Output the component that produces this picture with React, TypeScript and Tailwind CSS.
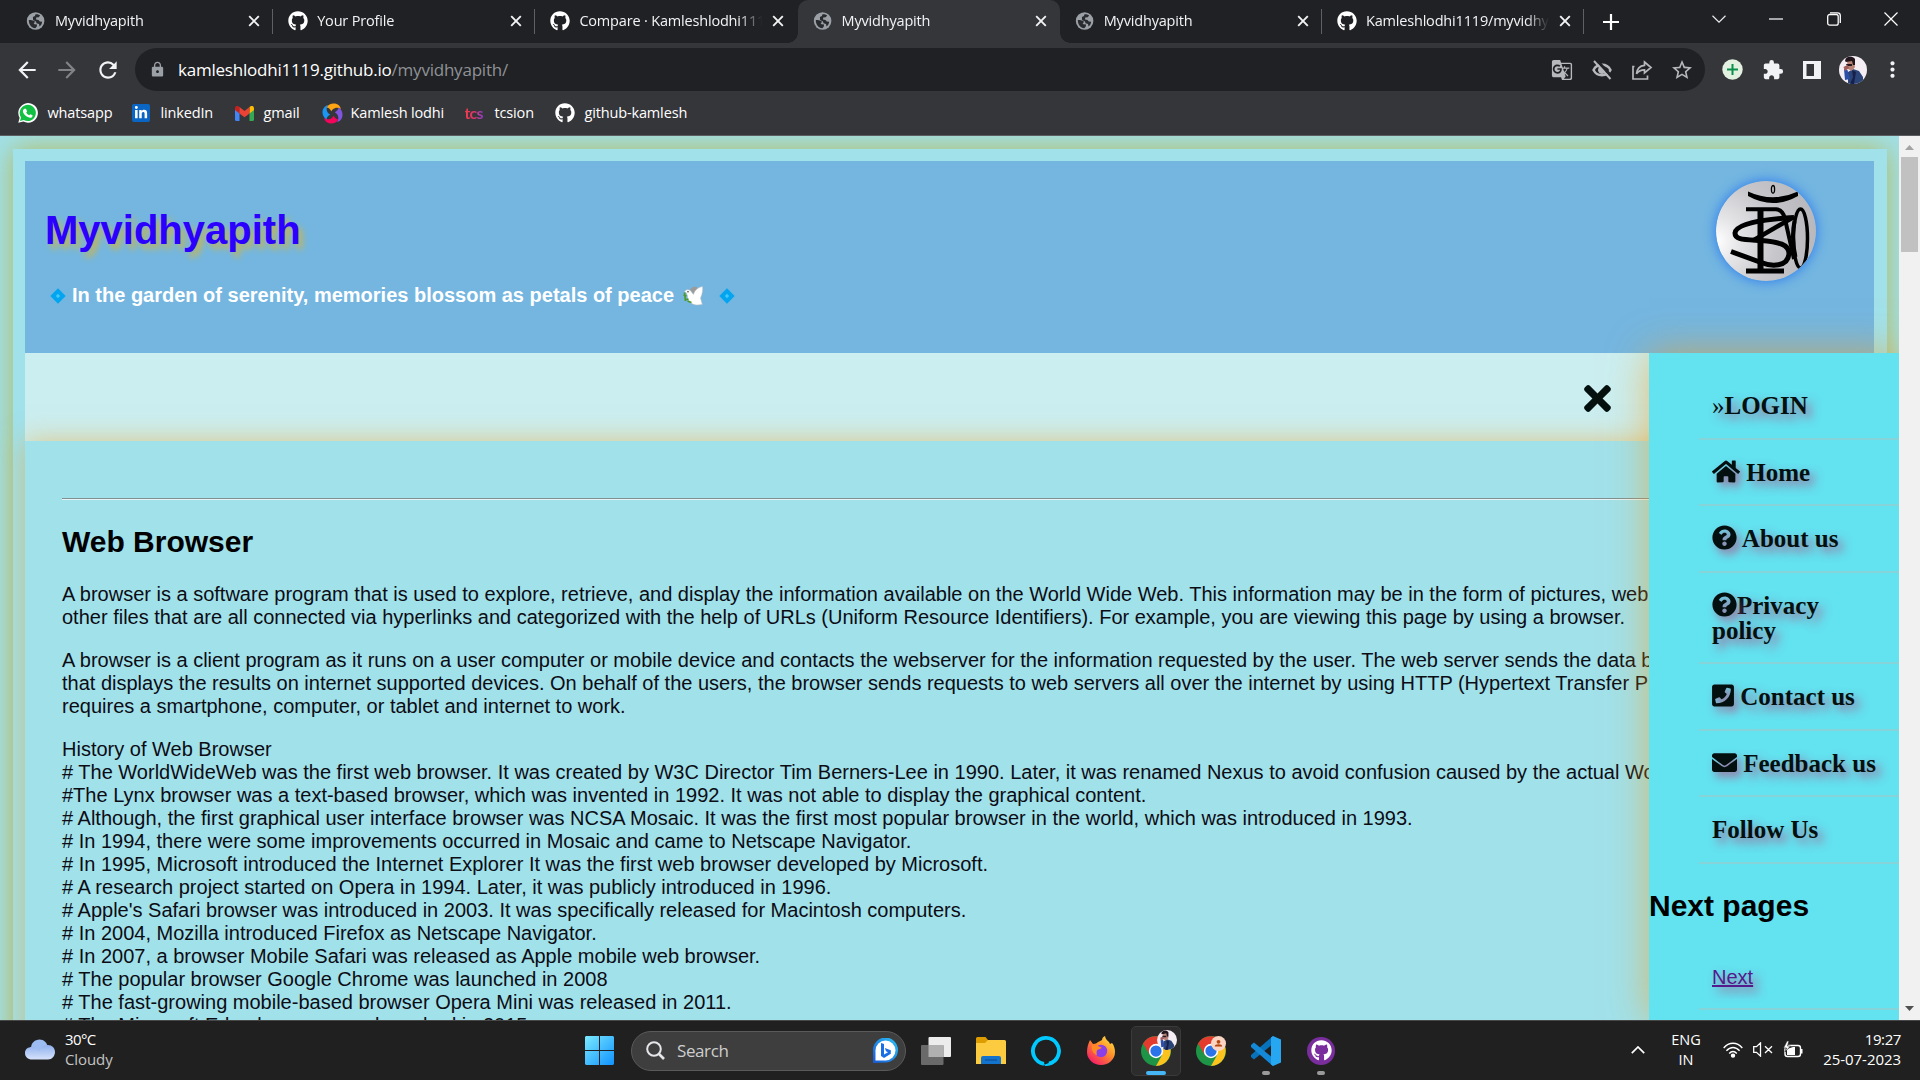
import React from "react";
import {
  FaGithub, FaHome, FaQuestionCircle, FaPhoneSquare, FaEnvelope, FaTimes, FaLinkedinIn,
} from "react-icons/fa";
import { MdLock, MdArrowBack, MdArrowForward, MdRefresh, MdStarBorder, MdExtension, MdMoreVert } from "react-icons/md";

const ui = "font-['Open_Sans','Noto_Sans',sans-serif]";

function Globe() {
  return (
    <svg width="20" height="20" viewBox="0 0 20 20">
      <circle cx="9.6" cy="10" r="8.800" fill="#9aa0a6" />
      <path d="M2.800 9c2 .1 4.600.3 5.700 1.300.9.900.200 1.500-.9 1.600l.9 1.300 2.600.2-.4 2.400-1.400 1.400C5.500 17 2.800 13.500 2.800 9zM9.500 3.200c1.500-.2 3.500.3 4.700 1.300l-1.500 1.800-2.500.1-.2 2 2.500.5 1.300 1.500 2.300.4c0 1.800-1 3.600-2.600 4.800l-.5-2.700-2.500-.600-.5-1.800-2.900-1.500-.2-3 2-1z" fill="#2a2b2f" />
    </svg>
  );
}

function Close() {
  return (
    <svg width="12" height="12" viewBox="0 0 12 12" stroke="#f1f3f4" strokeWidth="1.9">
      <path d="M1.200 1.200l9.600 9.600M10.800 1.200l-9.600 9.600" />
    </svg>
  );
}

type TabInfo = { title: string; kind: "globe" | "github"; active?: boolean; sep?: boolean };
const tabs: TabInfo[] = [
  { title: "Myvidhyapith", kind: "globe", sep: true },
  { title: "Your Profile", kind: "github", sep: true },
  { title: "Compare · Kamleshlodhi1119", kind: "github" },
  { title: "Myvidhyapith", kind: "globe", active: true },
  { title: "Myvidhyapith", kind: "globe", sep: true },
  { title: "Kamleshlodhi1119/myvidhyapith", kind: "github", sep: true },
];

function Tab({ title, kind, active, sep }: TabInfo) {
  return (
    <div className={"relative flex h-[43px] w-[262.200px] shrink-0 items-center pb-px pl-[15px] " + (active ? "rounded-t-[10px] bg-[#35363a]" : "")}>
      {active && (
        <>
          <i className="absolute bottom-0 -left-[10px] h-[10px] w-[10px] bg-[radial-gradient(circle_at_0_0,transparent_9.5px,#35363a_10px)]" />
          <i className="absolute -right-[10px] bottom-0 h-[10px] w-[10px] bg-[radial-gradient(circle_at_100%_0,transparent_9.5px,#35363a_10px)]" />
        </>
      )}
      <span className="w-[29px] shrink-0">{kind === "globe" ? <Globe /> : <FaGithub size={20} color="#fff" />}</span>
      <span className="w-[183px] shrink-0 overflow-hidden pb-px text-[14.500px] tracking-[-0.18px] whitespace-nowrap text-[#f1f3f4] [mask-image:linear-gradient(to_right,#000_160px,transparent_183px)]">{title}</span>
      <span className="ml-[10px] shrink-0"><Close /></span>
      {sep && <i className="absolute top-[9px] right-0 h-[25px] w-px bg-[#5f6064]" />}
    </div>
  );
}

function TabStrip() {
  return (
    <div className="flex h-[43px] bg-[#202124] pl-[11px]">
      {tabs.map((t, i) => <Tab key={i} {...t} />)}
      <div className="flex w-[54px] items-center justify-center">
        <svg width="16" height="16" viewBox="0 0 16 16" stroke="#fff" strokeWidth="2.200"><path d="M8 0v16M0 8h16" /></svg>
      </div>
      <div className="ml-auto flex h-[37px] w-[230px] shrink-0 items-center justify-around text-[#e8eaed]">
        <svg width="14" height="8" viewBox="0 0 14 8" fill="none" stroke="currentColor" strokeWidth="1.200"><path d="M.5.8L7 7.200 13.500.8" /></svg>
        <svg width="14" height="2" viewBox="0 0 14 2"><path d="M0 1h14" stroke="#fff" strokeWidth="1.200" /></svg>
        <svg width="14" height="14" viewBox="0 0 14 14" fill="none" stroke="#fff" strokeWidth="1.300"><rect x=".7" y="2.500" width="10.500" height="10.700" rx="2" /><path d="M3 .8h7.500q2.800 0 2.800 2.800V11" /></svg>
        <svg width="14" height="14" viewBox="0 0 14 14" stroke="#fff" strokeWidth="1.200"><path d="M.5.5l13 13M13.500.5l-13 13" /></svg>
      </div>
    </div>
  );
}

function Avatar({ size }: { size: number }) {
  return (
    <svg width={size} height={size} viewBox="0 0 28 28">
      <defs><clipPath id={"av" + size}><circle cx="14" cy="14" r="14" /></clipPath></defs>
      <g clipPath={`url(#av${size})`}>
        <rect width="28" height="28" fill="#f4eef4" />
        <path d="M9 28V16l5-3 6 2 4 6v7z" fill="#2b4478" />
        <path d="M5 13l3.500 1 2.500 9-5 1z" fill="#2b4fa8" />
        <path d="M8 5l7 0 1 6-3 4-4-2z" fill="#b98276" />
        <path d="M6 5c1-6 8-5 10-2l0 6-2 0-1-4-6 1z" fill="#23151c" />
        <path d="M7 8h6v2H8z" fill="#2a1a20" />
        <path d="M4.500 11l4-2 1.500 3-4 3z" fill="#a15c5c" />
        <path d="M13 14l1 7-3 7h4l2-12z" fill="#16204a" />
      </g>
    </svg>
  );
}

function Toolbar() {
  return (
    <div className="flex h-[53px] items-center bg-[#35363a] pl-[14px]">
      <MdArrowBack size={26} color="#f1f3f4" />
      <MdArrowForward size={26} color="#818387" className="ml-[14px]" />
      <MdRefresh size={26} color="#f1f3f4" className="ml-[15px]" />
      <div className="ml-[14px] flex h-[43px] w-[1570px] items-center rounded-full bg-[#202124] pl-[14px]">
        <MdLock size={17} color="#9aa0a6" />
        <span className="ml-[12px] text-[17px] tracking-[-0.22px] text-[#8f9296]"><span className="text-white">kamleshlodhi1119.github.io</span>/myvidhyapith/</span>
        <div className="mr-[11px] ml-auto flex items-center gap-[18px] text-[#b6b8bb]">
          <svg width="22" height="22" viewBox="0 0 24 24" fill="currentColor"><path d="M21 4H11l-1-3H3C1.900 1 1 1.900 1 3v15c0 1.100.9 2 2 2h8l1 3h9c1.100 0 2-.9 2-2V6c0-1.100-.9-2-2-2zM7 16c-2.760 0-5-2.240-5-5s2.240-5 5-5c1.350 0 2.480.5 3.350 1.300L9.030 8.570c-.38-.36-1.040-.78-2.030-.78-1.740 0-3.150 1.440-3.150 3.210S5.260 14.210 7 14.210c2.010 0 2.840-1.440 2.920-2.410H7v-1.710h4.680c.07.31.12.61.12 1.020C11.800 13.970 9.890 16 7 16zm6.170-5.420h3.700c-.43 1.250-1.110 2.430-2.050 3.470-.31-.35-.6-.72-.86-1.100l-.79-2.370zm8.330 9.920c0 .55-.45 1-1 1H14l2-2.500-1.040-3.100 3.100 3.100.92-.92-3.300-3.250.02-.02c1.130-1.250 1.930-2.690 2.400-4.220H20v-1.300h-4.530V8h-1.290v1.290h-1.440L11.460 5.500h9.040c.55 0 1 .45 1 1v14z" /></svg>
          <svg width="22" height="22" viewBox="0 0 22 22" fill="none" stroke="currentColor"><path d="M2.500 11c3.500-7 13.500-7 17 0-3.500 7-13.500 7-17 0z" strokeWidth="2.400" /><circle cx="11" cy="11" r="3.500" fill="currentColor" /><path d="M5.500 1l16 17.500" stroke="#202124" strokeWidth="3" /><path d="M3 2l16.500 18" strokeWidth="2" /></svg>
          <svg width="22" height="22" viewBox="0 0 22 22" fill="none" stroke="currentColor" strokeWidth="1.700"><path d="M3.500 7.500H2v12.500h14.500v-3.500" /><path d="M13.500 3l6.500 5.500-6.500 5.500v-3.200c-4 0-6 1-8 4 .5-5 3-8 8-8.500z" /></svg>
          <MdStarBorder size={24} className="-ml-px" />
        </div>
      </div>
      <div className="flex flex-1 items-center pl-[17px]">
        <svg width="21" height="21" viewBox="0 0 21 21"><circle cx="10.500" cy="10.500" r="10.200" fill="#e3f1e1" /><path d="M10.500 5v11M5 10.500h11" stroke="#0b8f4c" strokeWidth="2" /></svg>
        <MdExtension size={22} color="#f1f3f4" className="ml-[19px]" />
        <svg className="ml-[19px]" width="18" height="18" viewBox="0 0 18 18"><path fillRule="evenodd" fill="#f1f3f4" d="M0 0h18v18H0zM3.500 3v12H11V3z" /></svg>
        <span className="ml-[18px]"><Avatar size={28} /></span>
        <MdMoreVert size={25} color="#f1f3f4" className="ml-[13px]" />
      </div>
    </div>
  );
}

function GmailIcon() {
  return (
    <svg className="ml-px" width="19" height="15" viewBox="0 0 19 15">
      <path d="M0 2v11.500Q0 15 1.500 15H4.500V5z" fill="#4285f4" />
      <path d="M19 2v11.500Q19 15 17.500 15h-3V5z" fill="#34a853" />
      <path d="M14.500 1L16 0q3-.5 3 2.500V4l-4.500 3.500z" fill="#fbbc04" />
      <path d="M4.500 1L3 0Q0-.5 0 2.500V4l4.500 3.500z" fill="#c5221f" />
      <path d="M4.500 1l5 4 5-4v6.500l-5 3.800-5-3.800z" fill="#ea4335" />
    </svg>
  );
}

const blade = "M4.500 4.500C7.500-1 17-1.200 19 6c-2.500-1.800-5.800-1.900-8.200.3L9.200 8.200C8.300 6 6.500 4.600 4.500 4.500z";

function Swirl() {
  return (
    <svg className="ml-px" width="21" height="21" viewBox="0 0 21 21">
      <path d={blade} fill="#ffa412" />
      <path d={blade} fill="#7f55e0" transform="rotate(90 10.500 10.500)" />
      <path d={blade} fill="#f3055c" transform="rotate(180 10.500 10.500)" />
      <path d={blade} fill="#1c96f3" transform="rotate(270 10.500 10.500)" />
    </svg>
  );
}

function Bookmark({ icon, label, w }: { icon: React.ReactNode; label: string; w: string }) {
  return (
    <div className={"flex shrink-0 items-center " + w}>
      <span className="flex w-[30px] shrink-0 items-center">{icon}</span>
      <span className="text-[14.500px] tracking-[-0.15px] whitespace-nowrap text-white">{label}</span>
    </div>
  );
}

function Bookmarks() {
  return (
    <div className="flex h-[40px] items-start border-b border-[#5c5d60] bg-[#35363a] pl-[17.500px] [&>div]:h-[34px]">
      <Bookmark w="w-[113px]" label="whatsapp" icon={
        <span className="relative flex h-5 w-5 items-center justify-center">
          <svg className="absolute inset-0" width="20" height="20" viewBox="0 0 20 20"><path d="M.3 19.800l1.300-5A9.800 9.800 0 1 1 5.400 18.500z" fill="#fff" /><path d="M2 18l1-3.600A8.100 8.100 0 1 1 5.800 17z" fill="#12c143" /></svg>
          <svg className="relative" width="11" height="11" viewBox="0 0 11 11"><path d="M2.800.8l1.200 0 1.100 2.600-.9 1.200c.8 1.500 1.800 2.200 3 2.700l1-1.100 2.400 1.100c0 2-1.500 2.700-2.700 2.500C4 9 1.200 6 .9 3.300.9 2 1.600 1.100 2.800.8z" fill="#fff" /></svg>
        </span>} />
      <Bookmark w="w-[103px]" label="linkedIn" icon={<span className="ml-px flex h-[18px] w-[18px] items-center justify-center rounded-[2px] bg-[#0a66c2]"><FaLinkedinIn size={14} color="#fff" /></span>} />
      <Bookmark w="w-[87px]" label="gmail" icon={<GmailIcon />} />
      <Bookmark w="w-[144px]" label="Kamlesh lodhi" icon={<Swirl />} />
      <Bookmark w="w-[90px]" label="tcsion" icon={<span className="bg-linear-to-r from-[#ef3d4e] via-[#e23067] to-[#8f34c9] bg-clip-text font-['Lato',sans-serif] text-[16px] leading-none font-bold tracking-[-0.8px] text-transparent">tcs</span>} />
      <Bookmark w="w-[150px]" label="github-kamlesh" icon={<FaGithub size={20} color="#fff" />} />
    </div>
  );
}

function Logo() {
  return (
    <svg className="block rounded-full shadow-[0_0_12px_1px_#3480ee]" width="100" height="100" viewBox="0 0 100 100">
      <defs>
        <radialGradient id="lg" cx="0" cy=".6" r="1"><stop offset="0" stopColor="#fff" /><stop offset=".25" stopColor="#e4e4e7" /><stop offset=".6" stopColor="#c7c6ca" /><stop offset="1" stopColor="#b9b8bc" /></radialGradient>
        <clipPath id="lc"><circle cx="50" cy="50" r="50" /></clipPath>
      </defs>
      <g clipPath="url(#lc)">
        <rect width="100" height="100" fill="url(#lg)" />
        <g fill="none" stroke="#000">
          <ellipse cx="57" cy="8.300" rx="1.600" ry="3.800" strokeWidth="1.300" />
          <path d="M32 10.500Q57 22 82 10.500L82 15Q57 29 32 15z" fill="#000" stroke="none" />
          <path d="M30 28.300H60Q67 29 69 38L78 78" strokeWidth="4" />
          <path d="M44.500 28v62" strokeWidth="6" />
          <path d="M30 90h38" strokeWidth="4.800" />
          <path d="M78 36.500C50 38 20 42 19 52c0 7 9 6.500 26 7.500 18 1.500 28 4 28 13-1 14-18 13-28 9L15 70.500" strokeWidth="5" />
          <path d="M76 37L38 59" strokeWidth="4.500" />
          <ellipse cx="84.500" cy="57.500" rx="7" ry="29.500" strokeWidth="3.500" />
          <path d="M78.500 40Q75 57 79.500 76" strokeWidth="4" />
        </g>
      </g>
    </svg>
  );
}

function Diamond() {
  return (
    <svg width="16" height="16" viewBox="0 0 16 16"><path d="M8 .3L15.700 8 8 15.700.3 8z" fill="#03a5f0" /><path d="M8 5.800L10.200 8 8 10.200 5.800 8z" fill="#40c8f8" /></svg>
  );
}

function Dove() {
  return (
    <svg width="21" height="20" viewBox="0 0 21 20">
      <path d="M7 4C8 1 11 0 14 1l0 5-4 2z" fill="#9b9b9b" />
      <path d="M1.500 5.500C3 3 7 3 8.500 6L10.500 8.500c1-4 4-7 9-8 .6 3-.2 8-2 11.500l1.800 6.500-5.300.5C9 19 4.500 15.500 4.500 10L3.500 7z" fill="#fff" stroke="#bbb" strokeWidth=".5" />
      <circle cx="5" cy="5.800" r=".8" fill="#333" />
      <path d="M1.500 6.500l1 8.500m-2-6l3 1m-2 4l4-1m-1 2l4 1.500" stroke="#4d9a2c" strokeWidth="1.700" />
    </svg>
  );
}

const history = [
  "History of Web Browser",
  "# The WorldWideWeb was the first web browser. It was created by W3C Director Tim Berners-Lee in 1990. Later, it was renamed Nexus to avoid confusion caused by the actual World",
  "#The Lynx browser was a text-based browser, which was invented in 1992. It was not able to display the graphical content.",
  "# Although, the first graphical user interface browser was NCSA Mosaic. It was the first most popular browser in the world, which was introduced in 1993.",
  "# In 1994, there were some improvements occurred in Mosaic and came to Netscape Navigator.",
  "# In 1995, Microsoft introduced the Internet Explorer It was the first web browser developed by Microsoft.",
  "# A research project started on Opera in 1994. Later, it was publicly introduced in 1996.",
  "# Apple's Safari browser was introduced in 2003. It was specifically released for Macintosh computers.",
  "# In 2004, Mozilla introduced Firefox as Netscape Navigator.",
  "# In 2007, a browser Mobile Safari was released as Apple mobile web browser.",
  "# The popular browser Google Chrome was launched in 2008",
  "# The fast-growing mobile-based browser Opera Mini was released in 2011.",
  "# The Microsoft Edge browser was launched in 2015.",
];
const intro = [
  "A browser is a software program that is used to explore, retrieve, and display the information available on the World Wide Web. This information may be in the form of pictures, web pages,",
  "other files that are all connected via hyperlinks and categorized with the help of URLs (Uniform Resource Identifiers). For example, you are viewing this page by using a browser.",
];
const client = [
  "A browser is a client program as it runs on a user computer or mobile device and contacts the webserver for the information requested by the user. The web server sends the data back",
  "that displays the results on internet supported devices. On behalf of the users, the browser sends requests to web servers all over the internet by using HTTP (Hypertext Transfer Protocol).",
  "requires a smartphone, computer, or tablet and internet to work.",
];

function Para({ lines }: { lines: string[] }) {
  return <p className="mb-5">{lines.map((l) => <span key={l} className="block h-[23px]">{l}</span>)}</p>;
}

function Side() {
  const row = "ml-[50px] border-b-2 border-[#86d3da] pl-[13px] pt-[20px] font-['Liberation_Serif',serif] text-[25px] leading-[25px] font-bold text-[#04100f] [text-shadow:5px_5px_10px_#b04a80cc] [&_svg]:-mt-[8px] [&_svg]:inline-block [&_svg]:align-[-3px] [&_svg]:[filter:drop-shadow(4px_5px_4px_#b04a80b0)] ";
  return (
    <aside className="absolute top-[217px] right-0 z-10 h-[667px] w-[250px] overflow-visible bg-[#63e2f0] shadow-[0_0_37px_#f0a01f9c]">
      <div className="h-[20px]" />
      <div className={row + "h-[67px]"}><span className="font-normal">»</span>LOGIN</div>
      <div className={row + "h-[66px]"}><FaHome className="h-[25px] w-[28px]" /> Home</div>
      <div className={row + "h-[67px]"}><FaQuestionCircle className="h-[25px] w-[25px]" /> About us</div>
      <div className={row + "h-[91px]"}><FaQuestionCircle className="h-[25px] w-[25px]" />Privacy<br />policy</div>
      <div className={row + "h-[67px]"}><FaPhoneSquare className="h-[25px] w-[22px]" /> Contact us</div>
      <div className={row + "h-[66px]"}><FaEnvelope className="h-[25px] w-[25px]" /> Feedback us</div>
      <div className={row + "h-[67px]"}>Follow Us</div>
      <h2 className="mt-[24px] text-[30px] leading-[35px] font-bold">Next pages</h2>
      <div className="mt-[25px] ml-[50px] h-[62px] border-b-2 border-[#86d3da] pt-[18px] pl-[13px] text-[20px] leading-[23px] text-[#551a8b] [text-shadow:5px_5px_10px_#b04a80cc]"><span className="underline">Next</span></div>
    </aside>
  );
}

function Page() {
  return (
    <div className="relative flex h-[884px] bg-[#a1e1ea] font-['Liberation_Sans',Arial,sans-serif] text-black">
      <div className="relative w-[1899px] overflow-hidden">
        <div className="mt-[13px] ml-[13px] h-[1000px] w-[1874px] bg-[#a1e1ea] px-[12px] pt-[12px] shadow-[0_0_25px_#bca81cb0]">
          <header className="flex h-[192px] w-[1849px] justify-between bg-[#74b6e0] pl-[20px]">
            <div>
              <h1 className="mt-[46px] text-[40px] leading-[46px] font-bold text-[#2b00ff] [text-shadow:4px_5px_6px_#c4b458]">Myvidhyapith</h1>
              <div className="mt-[31px] flex items-center pl-[5px] text-[20px] leading-[23px] font-bold text-white">
                <Diamond /><span className="ml-[6px]">In the garden of serenity, memories blossom as petals of peace</span>
                <span className="ml-[9px]"><Dove /></span><span className="ml-[15px]"><Diamond /></span>
              </div>
            </div>
            <div className="mt-[20px] mr-[58px]"><Logo /></div>
          </header>
          <nav className="flex h-[88px] w-[1849px] items-center bg-[#cbeef0] pt-[2px] pl-[1553px]">
            <FaTimes size={39} color="#04100f" />
          </nav>
          <article className="relative h-[800px] w-[1849px] bg-[#a1e1ea] px-[37px] pt-[57px] text-[20px] leading-[23px] whitespace-nowrap text-[#0c0c14] shadow-[0_0_25px_#f0a01f80]">
            <hr className="h-[2px] border-t border-b border-t-[#7f8f94] border-b-[#e6f4f5]" />
            <h2 className="mt-[25px] mb-[24px] text-[30px] leading-[34px] font-bold text-black">Web Browser</h2>
            <Para lines={intro} />
            <Para lines={client} />
            <Para lines={history} />
          </article>
        </div>
        <Side />
      </div>
      <div className="flex w-[21px] flex-col items-center bg-[#f1f1f1] pt-[9px] pb-[9px]">
        <svg width="9" height="5" viewBox="0 0 9 5"><path d="M0 5L4.500 0 9 5z" fill="#a3a3a3" /></svg>
        <div className="mt-[7px] h-[95px] w-[17px] bg-[#c1c1c1]" />
        <svg className="mt-auto" width="9" height="5" viewBox="0 0 9 5"><path d="M0 0L4.500 5 9 0z" fill="#505050" /></svg>
      </div>
    </div>
  );
}

function Chrome() {
  return (
    <svg width="30" height="30" viewBox="0 0 48 48">
      <circle cx="24" cy="24" r="24" fill="#1e9447" />
      <path d="M24 13h20.800A24 24 0 0 1 24 48l10-18z" fill="#fcc31e" />
      <path d="M3.200 12L14 30l10-17h20.800A24 24 0 0 0 3.200 12z" fill="#e33b2e" />
      <circle cx="24" cy="24" r="11.500" fill="#fff" />
      <circle cx="24" cy="24" r="9" fill="#2a73e8" />
    </svg>
  );
}

function Taskbar() {
  return (
    <footer className="flex h-[60px] items-center border-t border-[#474747] bg-[#202020] text-[15px] leading-[20px] text-white">
      <div className="flex w-[585px] items-center pb-[3px] pl-[25px]">
        <svg width="30" height="21" viewBox="0 0 30 21">
          <defs><linearGradient id="cl" x1="0" y1="0" x2="0" y2="1"><stop offset="0" stopColor="#8fb0ee" /><stop offset="1" stopColor="#d5e2fb" /></linearGradient></defs>
          <path d="M6 9C6 4 10 .5 14.500.5S22 4 23 8l-4 8H7z" fill="#9dbcf2" />
          <path d="M0 14c0-4 3-6 7-6 3 0 5 2 7 4 2-4 5-6 9-6 4 0 7 3 7 7s-3 7.500-7 7.500H7c-4 0-7-2.500-7-6.500z" fill="url(#cl)" />
        </svg>
        <div className="ml-[10px] tracking-[-0.6px]"><div>30°C</div><div className="tracking-[-0.1px] text-[#c4c4c4]">Cloudy</div></div>
      </div>
      <svg width="29" height="29" viewBox="0 0 29 29">
        <defs><linearGradient id="wn" x1="0" y1="0" x2="1" y2="1"><stop offset="0" stopColor="#7beaff" /><stop offset="1" stopColor="#1092ff" /></linearGradient></defs>
        <path d="M1 0h13v14H0V1zM15 0h13l1 1v13H15zM0 15h14v14H1l-1-1zM15 15h14v13l-1 1H15z" fill="url(#wn)" />
      </svg>
      <div className="ml-[17px] flex h-[40px] w-[275px] items-center rounded-full border border-[#5a5a5a] bg-[#3e3e3e] pl-[14px]">
        <svg width="19" height="19" viewBox="0 0 19 19" fill="none" stroke="#e4e6ea" strokeWidth="2"><circle cx="8" cy="8" r="6.800" /><path d="M13 13l5 5" strokeWidth="2.600" /></svg>
        <span className="ml-[12px] text-[17px] tracking-[-0.4px] text-[#cecece]">Search</span>
        <svg className="mr-[7px] ml-auto" width="25" height="25" viewBox="0 0 25 25">
          <defs><linearGradient id="bg" x1="1" y1="0" x2="0" y2="1"><stop offset="0" stopColor="#2cc4f4" /><stop offset="1" stopColor="#1858d8" /></linearGradient></defs>
          <path d="M0 25V12a12.500 12.500 0 1 1 12.500 12.500z" fill="url(#bg)" /><path d="M2.500 22.500V12.500a10 10 0 1 1 10 10z" fill="#fff" />
          <path d="M8 5l3 1v10.500l4-2.300-2-1-1.200-3.200 6 2.200v3.600L11 20l-3-2z" fill="#1b6fe6" />
        </svg>
      </div>
      <svg className="ml-[15px]" width="30" height="28" viewBox="0 0 30 28"><rect x="7.500" width="22.500" height="20" rx="1" fill="#ececec" /><rect y="8" width="22.500" height="20" rx="1" fill="#6a6a6a" /><rect x="7.500" y="8" width="15" height="12" fill="#b0b0b0" /></svg>
      <svg className="ml-[25px]" width="30" height="27" viewBox="0 0 30 27"><path d="M0 1.500Q0 0 1.500 0h8L12 3h16v10H0z" fill="#dd9c00" /><path d="M0 6h9l3-3h16.500Q30 3 30 4.500V27H0z" fill="#fdcb3f" /><path d="M5 27v-6q0-2 2-2h16q2 0 2 2v6z" fill="#1473cc" /><path d="M9 23h12" stroke="#0c4d91" /></svg>
      <svg className="ml-[25px]" width="30" height="30" viewBox="0 0 30 30"><path d="M13 27.800A13 13 0 1 1 18 27.600" fill="none" stroke="#00c9ff" strokeWidth="3.800" /><path d="M11 25l3 5c5 0 9-2 11-5l-6 1.500-5 2z" fill="#00c9ff" /></svg>
      <svg className="ml-[26px]" width="28" height="29" viewBox="0 0 28 29">
        <defs><linearGradient id="ff" x1="1" y1="0" x2=".2" y2="1"><stop offset="0" stopColor="#fff04a" /><stop offset=".45" stopColor="#ff9428" /><stop offset="1" stopColor="#f5156c" /></linearGradient></defs>
        <path d="M3 4l3 4 3-.5C12 5 14 5 15 4c0-2 1-3 3-4 .5 3 2 4 4 6l1 2 2-1c2 2 3 6 3 9a14 13 0 0 1-28 0C0 11 1.500 7 3 4z" fill="url(#ff)" />
        <circle cx="14" cy="15" r="6.200" fill="#8b3fe8" /><path d="M5 9c3 1 6 0 10 3l-5 2c-1 3 0 4 0 5-4-1-6-6-5-10z" fill="#ff8a24" />
      </svg>
      <div className="relative ml-[16px] flex h-[50px] w-[50px] items-center justify-center rounded-[5px] border border-[#3a3a3a] bg-[#2c2c2c]">
        <Chrome />
        <span className="absolute top-[3px] right-[3px]"><Avatar size={20} /></span>
        <i className="absolute bottom-0 left-[14px] h-[4px] w-[20px] rounded-full bg-[#45b5f5]" />
      </div>
      <div className="relative ml-[15px]">
        <Chrome />
        <svg className="absolute top-0 right-0" width="15" height="15" viewBox="0 0 15 15"><circle cx="7.500" cy="7.500" r="7.500" fill="#fad5c3" /><circle cx="7.500" cy="5.800" r="1.900" fill="#b5460f" /><path d="M3.800 10.500q0-2.300 3.700-2.300t3.700 2.300z" fill="#b5460f" /></svg>
      </div>
      <div className="relative ml-[25px]">
        <svg width="30" height="30" viewBox="0 0 30 30"><path d="M22 0v8L3 23.500 0 21v-2z" fill="#0872bb" /><path d="M22 30v-8L3 6.500 0 9v2z" fill="#1389d8" /><path d="M22 0l8 3.500v23L22 30l-2-1.500v-27z" fill="#27a6f2" /></svg>
        <i className="absolute -bottom-[9px] left-[11px] h-[4px] w-[8px] rounded-full bg-[#9a9a9a]" />
      </div>
      <div className="relative ml-[26px] flex h-[28px] w-[28px] items-center justify-center rounded-full bg-[#7a2d9c]">
        <FaGithub size={21} color="#fff" />
        <i className="absolute -bottom-[10px] left-[10px] h-[4px] w-[8px] rounded-full bg-[#9a9a9a]" />
      </div>
      <div className="mr-[19px] ml-auto flex items-center pb-[2px]">
        <svg width="14" height="8" viewBox="0 0 14 8" fill="none" stroke="#fff" strokeWidth="1.700"><path d="M.8 7.200L7 1l6.200 6.200" /></svg>
        <div className="ml-[26px] w-[30px] text-center text-[14.500px]"><div>ENG</div><div>IN</div></div>
        <svg className="ml-[22px]" width="20" height="16" viewBox="0 0 20 16" fill="none" stroke="#fff" strokeWidth="1.400"><path d="M.7 6C6-.3 14-.3 19.300 6M3.400 8.800c4-4.400 9.200-4.400 13.200 0M6.200 11.500c2.400-2.600 5.200-2.600 7.600 0" /><circle cx="10" cy="13.600" r="1.500" fill="#fff" /></svg>
        <svg className="ml-[10px]" width="20" height="15" viewBox="0 0 20 15" fill="none" stroke="#fff" strokeWidth="1.300"><path d="M.7 4.700h2.800L7.500.9v13.200L3.500 10.300H.7zM12 4.200l7 6.800M19 4.200L12 11" /></svg>
        <svg className="ml-[10px]" width="20" height="17" viewBox="0 0 20 17"><rect x="2" y="4.500" width="15.500" height="11" rx="2.500" fill="none" stroke="#fff" strokeWidth="1.400" /><path d="M4 8l6-2h2v8H4z" fill="#fff" /><path d="M18.500 8v4.500" stroke="#fff" strokeWidth="2" /><path d="M4 0L.5 7h3L2 11l5.500-6h-3L6 0z" fill="#fff" stroke="#202020" strokeWidth=".6" /></svg>
        <div className="w-[98px] pb-px text-right"><div className="tracking-[-0.4px]">19:27</div><div className="tracking-[-0.05px]">25-07-2023</div></div>
      </div>
    </footer>
  );
}

export default function App() {
  return (
    <div className={"flex h-[1080px] w-[1920px] flex-col overflow-hidden " + ui}>
      <TabStrip />
      <Toolbar />
      <Bookmarks />
      <Page />
      <Taskbar />
    </div>
  );
}
